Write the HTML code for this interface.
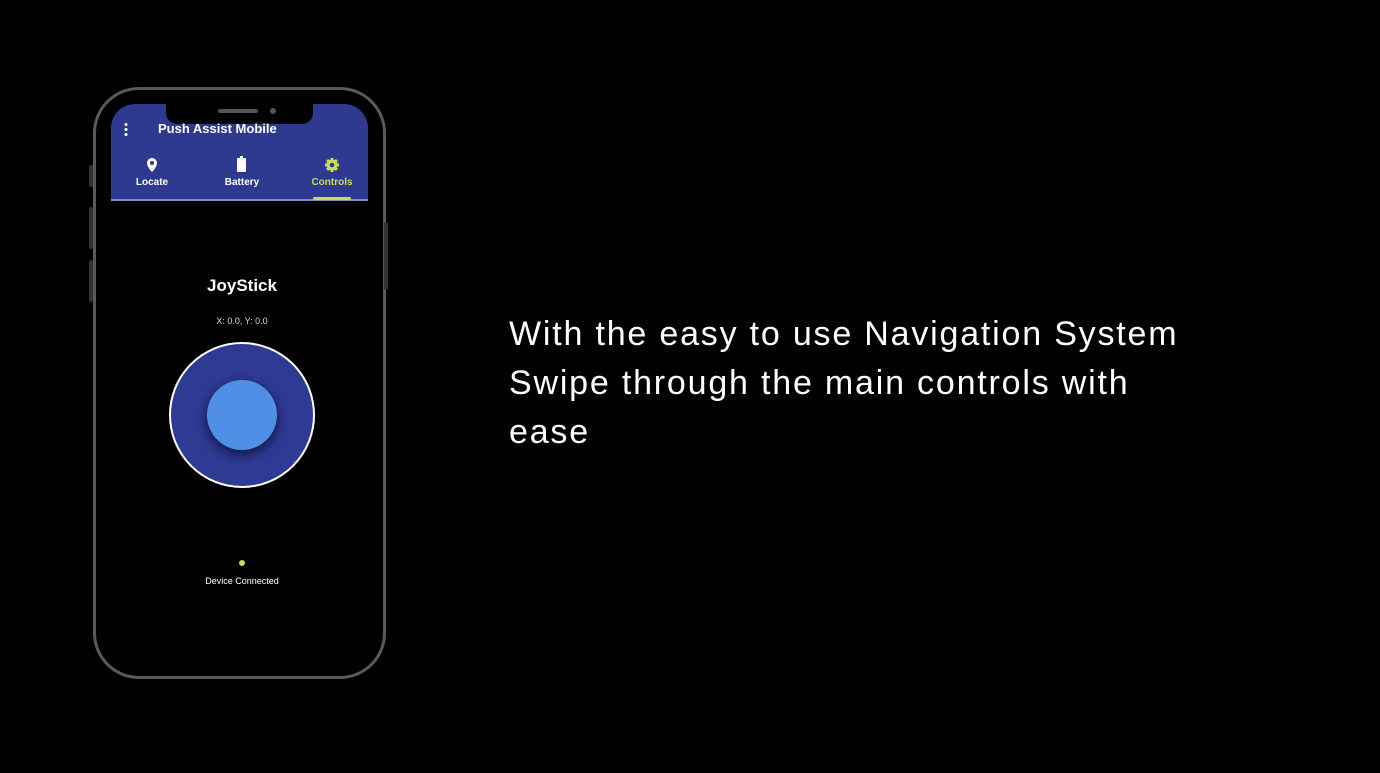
<!DOCTYPE html>
<html><head><style>
body{margin:0;width:1380px;height:773px;background:#000;position:relative;overflow:hidden;font-family:"Liberation Sans",sans-serif}
.a{position:absolute}
</style></head><body>
<div class="a" style="left:93px;top:87px;width:287px;height:586px;border:3px solid #5a5a5a;border-radius:46px"></div>
<div class="a" style="left:89px;top:165px;width:4px;height:22px;background:#333;border-radius:2px"></div>
<div class="a" style="left:89px;top:207px;width:4px;height:42px;background:#333;border-radius:2px"></div>
<div class="a" style="left:89px;top:260px;width:4px;height:42px;background:#333;border-radius:2px"></div>
<div class="a" style="left:384px;top:222px;width:4px;height:68px;background:#333;border-radius:2px"></div>
<div class="a" style="left:111px;top:104px;width:257px;height:95px;background:#2e3a8f;border-radius:24px 24px 0 0"></div>
<div class="a" style="left:111px;top:199px;width:257px;height:2px;background:#8a8fb8"></div>
<div class="a" style="left:166px;top:100px;width:147px;height:24px;background:#000;border-radius:0 0 11px 11px"></div>
<div class="a" style="left:218px;top:109px;width:40px;height:4px;background:#555;border-radius:2px"></div>
<div class="a" style="left:270px;top:108px;width:6px;height:6px;background:#555;border-radius:50%"></div>
<div class="a" style="left:124px;top:122px;width:4px;height:14px;background:radial-gradient(circle,#fff 1.4px,transparent 1.6px) 0 0/4px 5px"></div>
<div class="a" style="left:158px;top:121px;color:#fff;font-weight:bold;font-size:13px">Push Assist Mobile</div>
<svg class="a" style="left:145px;top:157px" width="14" height="16" viewBox="0 0 14 16"><path d="M7 1a5 5 0 0 0-5 5c0 4 5 9 5 9s5-5 5-9a5 5 0 0 0-5-5z" fill="#fff"/><circle cx="7" cy="6" r="2" fill="#2e3a8f"/></svg>
<div class="a" style="left:237px;top:158px;width:9px;height:14px;background:#fff;border-radius:1px"></div>
<div class="a" style="left:240px;top:156px;width:3px;height:2px;background:#fff"></div>
<svg class="a" style="left:324px;top:157px" width="16" height="16" viewBox="0 0 16 16"><g fill="#c8dc58"><circle cx="8" cy="8" r="5.5"/><rect x="6.5" y="1" width="3" height="14"/><rect x="1" y="6.5" width="14" height="3"/><rect x="6.5" y="1" width="3" height="14" transform="rotate(45 8 8)"/><rect x="6.5" y="1" width="3" height="14" transform="rotate(-45 8 8)"/></g><circle cx="8" cy="8" r="2.3" fill="#2e3a8f"/></svg>
<div class="a" style="left:132px;top:177px;width:40px;text-align:center;color:#fff;font-size:10px;font-weight:bold">Locate</div>
<div class="a" style="left:217px;top:177px;width:50px;text-align:center;color:#fff;font-size:10px;font-weight:bold">Battery</div>
<div class="a" style="left:307px;top:177px;width:50px;text-align:center;color:#c8dc58;font-size:10px;font-weight:bold">Controls</div>
<div class="a" style="left:313px;top:197px;width:38px;height:3px;background:#c8dc58;border-radius:2px"></div>
<div class="a" style="left:180px;top:276px;width:124px;text-align:center;color:#fff;font-weight:bold;font-size:17px">JoyStick</div>
<div class="a" style="left:180px;top:316px;width:124px;text-align:center;color:#ddd;font-size:9px">X: 0.0, Y: 0.0</div>
<div class="a" style="left:169px;top:342px;width:142px;height:142px;border:2px solid #fff;border-radius:50%;background:#2f3a95"></div>
<div class="a" style="left:207px;top:380px;width:70px;height:70px;border-radius:50%;background:#4f8fe6;box-shadow:0 4px 12px rgba(0,0,20,.7)"></div>
<div class="a" style="left:239px;top:560px;width:6px;height:6px;border-radius:50%;background:#c8dc58"></div>
<div class="a" style="left:182px;top:576px;width:120px;text-align:center;color:#fff;font-size:9px">Device Connected</div>
<div class="a" style="left:509px;top:310px;width:800px;color:#fff;font-size:34px;line-height:49px;letter-spacing:1.8px">With the easy to use Navigation System<br>Swipe through the main controls with<br>ease</div>
</body></html>
